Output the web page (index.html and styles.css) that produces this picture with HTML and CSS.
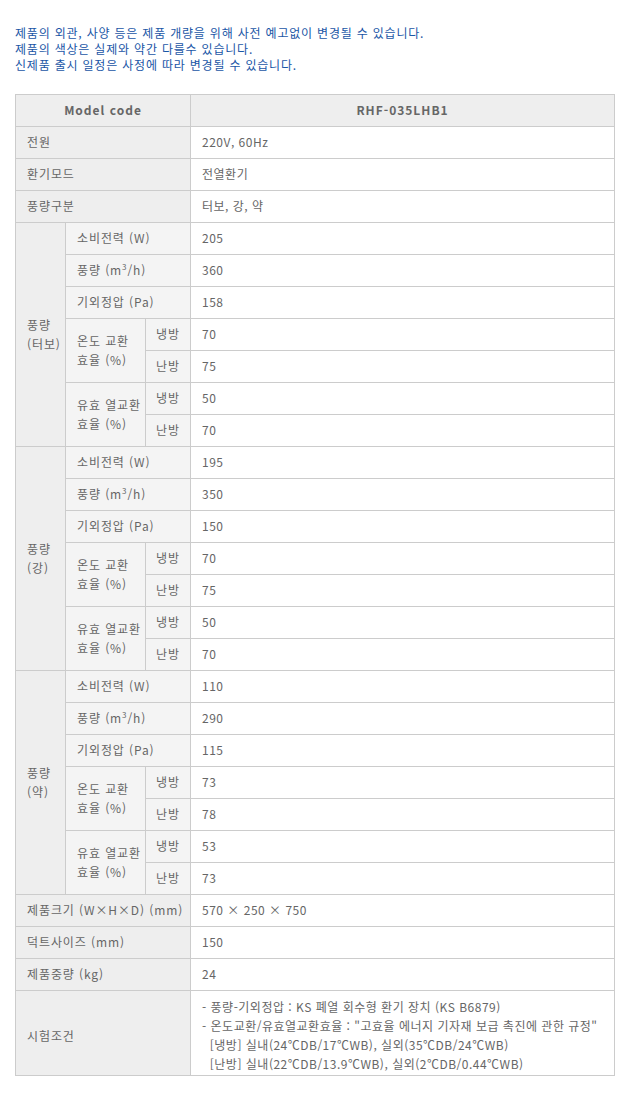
FILE: index.html
```html
<!DOCTYPE html>
<html lang="ko">
<head>
  <meta charset="UTF-8">
  <meta name="viewport" content="width=device-width, initial-scale=1.0">
  <title>RHF-035LHB1 제품 사양</title>
  <link rel="stylesheet" href="styles.css">
</head>
<body>
  <div class="notice">
    <p>제품의 외관, 사양 등은 제품 개량을 위해 사전 예고없이 변경될 수 있습니다.</p>
    <p>제품의 색상은 실제와 약간 다를수 있습니다.</p>
    <p>신제품 출시 일정은 사정에 따라 변경될 수 있습니다.</p>
  </div>

  <table class="spec">
    <colgroup>
      <col class="c1">
      <col class="c2">
      <col class="c3">
      <col class="c4">
    </colgroup>
    <tr class="head">
      <th colspan="3">Model code</th>
      <th>RHF-035LHB1</th>
    </tr>
    <tr>
      <td class="label" colspan="3">전원</td>
      <td>220V, 60Hz</td>
    </tr>
    <tr>
      <td class="label" colspan="3">환기모드</td>
      <td>전열환기</td>
    </tr>
    <tr>
      <td class="label" colspan="3">풍량구분</td>
      <td>터보, 강, 약</td>
    </tr>

    <!-- 터보 -->
    <tr>
      <td class="label" rowspan="7">풍량<br>(터보)</td>
      <td class="sub" colspan="2">소비전력 (W)</td>
      <td>205</td>
    </tr>
    <tr>
      <td class="sub" colspan="2">풍량 (m<sup>3</sup>/h)</td>
      <td>360</td>
    </tr>
    <tr>
      <td class="sub" colspan="2">기외정압 (Pa)</td>
      <td>158</td>
    </tr>
    <tr>
      <td class="sub" rowspan="2">온도 교환<br>효율 (%)</td>
      <td class="sub mode">냉방</td>
      <td>70</td>
    </tr>
    <tr>
      <td class="sub mode">난방</td>
      <td>75</td>
    </tr>
    <tr>
      <td class="sub" rowspan="2">유효 열교환<br>효율 (%)</td>
      <td class="sub mode">냉방</td>
      <td>50</td>
    </tr>
    <tr>
      <td class="sub mode">난방</td>
      <td>70</td>
    </tr>

    <!-- 강 -->
    <tr>
      <td class="label" rowspan="7">풍량<br>(강)</td>
      <td class="sub" colspan="2">소비전력 (W)</td>
      <td>195</td>
    </tr>
    <tr>
      <td class="sub" colspan="2">풍량 (m<sup>3</sup>/h)</td>
      <td>350</td>
    </tr>
    <tr>
      <td class="sub" colspan="2">기외정압 (Pa)</td>
      <td>150</td>
    </tr>
    <tr>
      <td class="sub" rowspan="2">온도 교환<br>효율 (%)</td>
      <td class="sub mode">냉방</td>
      <td>70</td>
    </tr>
    <tr>
      <td class="sub mode">난방</td>
      <td>75</td>
    </tr>
    <tr>
      <td class="sub" rowspan="2">유효 열교환<br>효율 (%)</td>
      <td class="sub mode">냉방</td>
      <td>50</td>
    </tr>
    <tr>
      <td class="sub mode">난방</td>
      <td>70</td>
    </tr>

    <!-- 약 -->
    <tr>
      <td class="label" rowspan="7">풍량<br>(약)</td>
      <td class="sub" colspan="2">소비전력 (W)</td>
      <td>110</td>
    </tr>
    <tr>
      <td class="sub" colspan="2">풍량 (m<sup>3</sup>/h)</td>
      <td>290</td>
    </tr>
    <tr>
      <td class="sub" colspan="2">기외정압 (Pa)</td>
      <td>115</td>
    </tr>
    <tr>
      <td class="sub" rowspan="2">온도 교환<br>효율 (%)</td>
      <td class="sub mode">냉방</td>
      <td>73</td>
    </tr>
    <tr>
      <td class="sub mode">난방</td>
      <td>78</td>
    </tr>
    <tr>
      <td class="sub" rowspan="2">유효 열교환<br>효율 (%)</td>
      <td class="sub mode">냉방</td>
      <td>53</td>
    </tr>
    <tr>
      <td class="sub mode">난방</td>
      <td>73</td>
    </tr>

    <tr>
      <td class="label" colspan="3">제품크기 (W×H×D) (mm)</td>
      <td>570 × 250 × 750</td>
    </tr>
    <tr>
      <td class="label" colspan="3">덕트사이즈 (mm)</td>
      <td>150</td>
    </tr>
    <tr>
      <td class="label" colspan="3">제품중량 (kg)</td>
      <td>24</td>
    </tr>
    <tr class="test">
      <td class="label" colspan="3">시험조건</td>
      <td>
        - 풍량-기외정압 : KS 폐열 회수형 환기 장치 (KS B6879)<br>
        - 온도교환/유효열교환효율 : "고효율 에너지 기자재 보급 촉진에 관한 규정"<br>
        &nbsp;&nbsp;[냉방] 실내(24℃DB/17℃WB), 실외(35℃DB/24℃WB)<br>
        &nbsp;&nbsp;[난방] 실내(22℃DB/13.9℃WB), 실외(2℃DB/0.44℃WB)
      </td>
    </tr>
  </table>
</body>
</html>
```

FILE: styles.css
```css
body {
  margin: 0;
  padding: 25px 15px 20px 15px;
  font-family: "Noto Sans CJK KR", "Noto Sans", sans-serif;
  font-size: 12px;
  color: #666666;
  background-color: #ffffff;
}

.notice {
  margin-bottom: 21px;
}

.notice p {
  margin: 0;
  line-height: 16px;
  letter-spacing: 0.8px;
  color: #1a56a6;
}

.spec {
  width: 599px;
  border-collapse: collapse;
  table-layout: fixed;
}

.spec .c1 { width: 50px; }
.spec .c2 { width: 80px; }
.spec .c3 { width: 45px; }
.spec .c4 { width: 424px; }

.spec th,
.spec td {
  height: 29px;
  padding: 0 11px 2px 11px;
  border: 1px solid #cccccc;
  line-height: 19px;
  letter-spacing: 0.5px;
  text-align: left;
  vertical-align: middle;
  white-space: nowrap;
}

.spec .head th {
  background-color: #eeeeee;
  text-align: center;
  font-weight: bold;
  letter-spacing: 1px;
  color: #666666;
}

.spec td.label,
.spec td.sub {
  letter-spacing: 0.9px;
}

.spec td.label {
  background-color: #eeeeee;
}

.spec td.sub {
  background-color: #f4f4f4;
}

.spec td.mode {
  padding: 0 0 2px 0;
  text-align: center;
}

.spec sup {
  font-size: 8px;
  line-height: 0;
}

.spec .test td {
  height: 76px;
  padding-top: 6px;
  padding-bottom: 2px;
}
```
